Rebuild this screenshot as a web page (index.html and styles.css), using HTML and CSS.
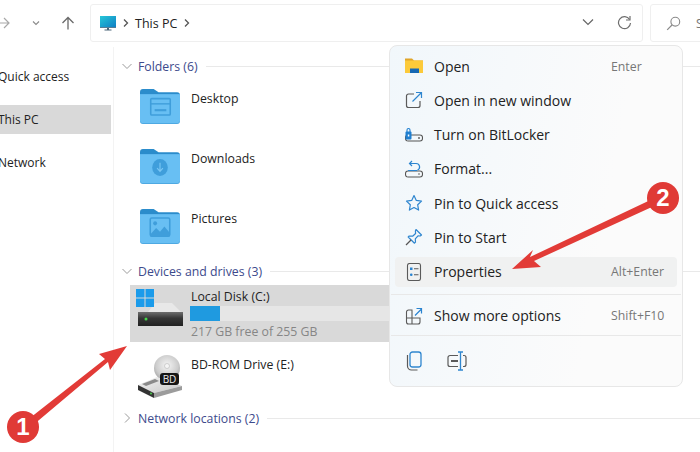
FILE: index.html
```html
<!DOCTYPE html>
<html lang="en">
<head>
<meta charset="utf-8">
<title>This PC</title>
<link rel="stylesheet" href="styles.css">
</head>
<body>
<div class="window">
  <header class="toolbar">
    <nav class="nav">
      <svg class="nav-forward" width="16" height="12" viewBox="0 0 16 12"><path d="M0 6h15M10 1l5 5-5 5" fill="none" stroke="#a8a8a8" stroke-width="1.200"/></svg>
      <svg class="nav-down" width="10" height="10" viewBox="0 0 10 10"><path d="M2 3.500l3 3 3-3" fill="none" stroke="#8a8a8a" stroke-width="1.100"/></svg>
      <svg class="nav-up" width="14" height="14" viewBox="0 0 14 14"><path d="M7 13.500V1.500M1.500 7L7 1.500 12.500 7" fill="none" stroke="#6a6a6a" stroke-width="1.300"/></svg>
    </nav>
    <div class="address">
      <svg class="pc-icon" width="16" height="15" viewBox="0 0 16 15"><defs><linearGradient id="scr" x1="0" y1="0" x2="1" y2="1"><stop offset="0" stop-color="#27c7d8"/><stop offset="1" stop-color="#0f7fc4"/></linearGradient></defs><rect x="0" y="0" width="16" height="11" fill="url(#scr)"/><path d="M0 11h16v.8H0z" fill="#2c5c7c"/><path d="M7 12h2v1.400H7zM4.500 13.400h7v1h-7z" fill="#4a6578"/></svg>
      <svg class="crumb-sep" width="8" height="10" viewBox="0 0 8 10"><path d="M2 1.500l3.500 3.500L2 8.500" fill="none" stroke="#555" stroke-width="1.300"/></svg>
      <span class="crumb">This PC</span>
      <svg class="crumb-sep" width="8" height="10" viewBox="0 0 8 10"><path d="M2 1.500l3.500 3.500L2 8.500" fill="none" stroke="#555" stroke-width="1.300"/></svg>
      <svg class="addr-down" width="12" height="8" viewBox="0 0 12 8"><path d="M1 1.500l5 5 5-5" fill="none" stroke="#666" stroke-width="1.200"/></svg>
      <svg class="addr-refresh" width="15" height="15" viewBox="0 0 15 15"><path d="M12.600 4.500A6 6 0 1 0 13.500 8" fill="none" stroke="#6e6e6e" stroke-width="1.200"/><path d="M13 1v4h-4" fill="none" stroke="#6e6e6e" stroke-width="1.200"/></svg>
    </div>
    <div class="search">
      <svg width="15" height="15" viewBox="0 0 15 15"><circle cx="9.300" cy="5.700" r="4.400" fill="none" stroke="#8a8a8a" stroke-width="1.100"/><path d="M6 9L1.200 13.800" stroke="#8a8a8a" stroke-width="1.200"/></svg>
      <span class="search-text">S</span>
    </div>
  </header>

  <div class="body">
    <aside class="sidebar">
      <div class="side-item">Quick access</div>
      <div class="side-item side-current">This PC</div>
      <div class="side-item">Network</div>
    </aside>

    <main class="content">
      <div class="group-head">
        <svg width="10" height="10" viewBox="0 0 10 10"><path d="M.5 3l4.500 4.500L9.500 3" fill="none" stroke="#9a9a9a" stroke-width="1"/></svg>
        <span class="group-name">Folders (6)</span><span class="group-line"></span>
      </div>
      <div class="folder">
        <svg width="40" height="35" viewBox="0 3 41 33" preserveAspectRatio="none"><path d="M0 6a3 3 0 0 1 3-3h11l5 3h19a3 3 0 0 1 3 3v4H0z" fill="#2b8ccb"/><path d="M0 8h41v25a3 3 0 0 1-3 3H3a3 3 0 0 1-3-3z" fill="#4ea9e2"/><path d="M0 8h41v25a2.500 2.500 0 0 1-2.500 2H2.500A2.500 2.500 0 0 1 0 33z" fill="#68bff3"/><rect x="11" y="12" width="20" height="15.500" rx="1" fill="none" stroke="#3f9edb" stroke-width="1.600"/><path d="M11 17h20" stroke="#3f9edb" stroke-width="1.300"/><path d="M15 23h12" stroke="#3f9edb" stroke-width="2"/></svg>
        <span class="item-name">Desktop</span>
      </div>
      <div class="folder">
        <svg width="40" height="35" viewBox="0 3 41 33" preserveAspectRatio="none"><path d="M0 6a3 3 0 0 1 3-3h11l5 3h19a3 3 0 0 1 3 3v4H0z" fill="#2b8ccb"/><path d="M0 8h41v25a3 3 0 0 1-3 3H3a3 3 0 0 1-3-3z" fill="#4ea9e2"/><path d="M0 8h41v25a2.500 2.500 0 0 1-2.500 2H2.500A2.500 2.500 0 0 1 0 33z" fill="#68bff3"/><circle cx="20.500" cy="20.500" r="8" fill="#3f9edb"/><path d="M20.500 16v8M17.500 21l3 3 3-3" fill="none" stroke="#79c6f4" stroke-width="1.200"/></svg>
        <span class="item-name">Downloads</span>
      </div>
      <div class="folder">
        <svg width="40" height="35" viewBox="0 3 41 33" preserveAspectRatio="none"><path d="M0 6a3 3 0 0 1 3-3h11l5 3h19a3 3 0 0 1 3 3v4H0z" fill="#2b8ccb"/><path d="M0 8h41v25a3 3 0 0 1-3 3H3a3 3 0 0 1-3-3z" fill="#4ea9e2"/><path d="M0 8h41v25a2.500 2.500 0 0 1-2.500 2H2.500A2.500 2.500 0 0 1 0 33z" fill="#68bff3"/><rect x="10.500" y="11.500" width="20" height="17" rx="1.500" fill="none" stroke="#3f9edb" stroke-width="1.600"/><circle cx="15.500" cy="16.500" r="2" fill="#3f9edb"/><path d="M10.500 27l6-6 4 3.500 4.500-5 5.500 6V29h-20z" fill="#3f9edb"/></svg>
        <span class="item-name">Pictures</span>
      </div>

      <div class="group-head group-devices">
        <svg width="10" height="10" viewBox="0 0 10 10"><path d="M.5 3l4.500 4.500L9.500 3" fill="none" stroke="#9a9a9a" stroke-width="1"/></svg>
        <span class="group-name">Devices and drives (3)</span><span class="group-line"></span>
      </div>
      <div class="drive drive-selected">
        <svg class="drive-icon" width="50" height="40" viewBox="0 0 50 40"><defs><linearGradient id="hdd" x1="0" y1="0" x2="0" y2="1"><stop offset="0" stop-color="#6e6e6e"/><stop offset=".45" stop-color="#363636"/><stop offset="1" stop-color="#222"/></linearGradient></defs><path d="M14 23l7-9h17l9 9z" fill="#e8e8e8"/><rect x="4" y="23" width="45" height="14" fill="url(#hdd)"/><circle cx="12" cy="30" r="1.500" fill="#46d84a"/><path d="M2 0h8.500v8.500H2zM11.500 0H20v8.500h-8.500zM2 9.500h8.500V18H2zM11.500 9.500H20V18h-8.500z" fill="#1b9bea"/></svg>
        <div class="drive-info">
          <span class="item-name">Local Disk (C:)</span>
          <div class="meter"><div class="meter-fill"></div></div>
          <span class="drive-free">217 GB free of 255 GB</span>
        </div>
      </div>
      <div class="drive drive-bd">
        <div class="bd-icon">
          <svg width="50" height="46" viewBox="0 0 50 46"><defs><radialGradient id="disc" cx=".5" cy=".4" r=".6"><stop offset="0" stop-color="#f4f4f4"/><stop offset=".7" stop-color="#cdcdcd"/><stop offset="1" stop-color="#a9a9a9"/></radialGradient><linearGradient id="box" x1="0" y1="0" x2="1" y2="1"><stop offset="0" stop-color="#f4f4f4"/><stop offset="1" stop-color="#c6c6c6"/></linearGradient></defs><circle cx="30" cy="15" r="13" fill="url(#disc)"/><circle cx="30" cy="13" r="2.500" fill="#f5f5f5" stroke="#aaa" stroke-width=".5"/><path d="M1 32l19-8 25 9-28 7z" fill="url(#box)"/><path d="M1 32l16 8v5L1 37z" fill="#333"/><path d="M17 40l28-7v4l-28 8z" fill="#9c9c9c"/><path d="M5 31l13-5 4 2-13 5z" fill="#8a8a8a"/><circle cx="14" cy="40.500" r="1" fill="#4fd14f"/></svg>
          <span class="bd-badge">BD</span>
        </div>
        <span class="item-name">BD-ROM Drive (E:)</span>
      </div>

      <div class="group-head">
        <svg width="10" height="10" viewBox="0 0 10 10"><path d="M3 .5l4.500 4.500L3 9.500" fill="none" stroke="#9a9a9a" stroke-width="1"/></svg>
        <span class="group-name">Network locations (2)</span><span class="group-line"></span>
      </div>
    </main>
  </div>

  <div class="menu">
    <div class="menu-row">
      <svg class="menu-icon" width="18" height="18" viewBox="0 0 18 18"><path d="M0 1.500h7l2 2h9V5H0z" fill="#e0a428"/><path d="M0 3.500h18V16H0z" fill="#fcca3a"/><path d="M5 11.500h9V16H5z" fill="#1668b4"/></svg>
      <span class="menu-label">Open</span><span class="menu-key">Enter</span>
    </div>
    <div class="menu-row">
      <svg class="menu-icon" width="18" height="18" viewBox="0 0 18 18"><path d="M9 3H3.500A2 2 0 0 0 1.500 5v9.500a2 2 0 0 0 2 2H13a2 2 0 0 0 2-2V10" fill="none" stroke="#5a5a5a" stroke-width="1.200"/><path d="M7.500 10.500L16 2M11 1.500h5.500V7" fill="none" stroke="#2f86cf" stroke-width="1.200"/></svg>
      <span class="menu-label">Open in new window</span>
    </div>
    <div class="menu-row">
      <svg class="menu-icon" width="18" height="18" viewBox="0 0 18 18"><rect x=".5" y="9" width="17" height="6" rx="2.500" fill="none" stroke="#555" stroke-width="1.100"/><circle cx="14" cy="12" r=".9" fill="#555"/><rect x=".5" y="5.500" width="6" height="8" rx="1" fill="#1f7fd0"/><path d="M2 6V4a1.500 1.500 0 0 1 3 0v2" fill="none" stroke="#1f7fd0" stroke-width="1.100"/><rect x="2.800" y="8.500" width="1.500" height="2" fill="#fff"/></svg>
      <span class="menu-label">Turn on BitLocker</span>
    </div>
    <div class="menu-row">
      <svg class="menu-icon" width="18" height="18" viewBox="0 0 18 18"><rect x=".5" y="11" width="17" height="6" rx="2.500" fill="none" stroke="#555" stroke-width="1.100"/><circle cx="14" cy="14" r=".8" fill="#555"/><path d="M4.500 3.500h6.500a3.500 3.500 0 0 1 1.500 6.700M7 1L4.500 3.500 7 6M3 10.500h9" fill="none" stroke="#2a84d0" stroke-width="1.200"/></svg>
      <span class="menu-label">Format...</span>
    </div>
    <div class="menu-row">
      <svg class="menu-icon" width="18" height="18" viewBox="0 0 18 18"><path d="M9 1.500l2.300 4.900 5.200.7-3.800 3.700.9 5.300L9 13.500l-4.600 2.600.9-5.300L1.500 7.100l5.200-.7z" fill="none" stroke="#2f86cf" stroke-width="1.200" stroke-linejoin="round"/></svg>
      <span class="menu-label">Pin to Quick access</span>
    </div>
    <div class="menu-row">
      <svg class="menu-icon" width="18" height="18" viewBox="0 0 18 18"><path d="M11 1.500l5.500 5.500-1.300 1-2.200-.2-2.700 3 .2 3.400-1 1L3.200 9l1-1 3.400.2 3-2.700L10.400 3z" fill="none" stroke="#2f86cf" stroke-width="1.200" stroke-linejoin="round"/><path d="M1 17l5-5" stroke="#555" stroke-width="1.200"/></svg>
      <span class="menu-label">Pin to Start</span>
    </div>
    <div class="menu-row menu-row-hover">
      <svg class="menu-icon" width="18" height="18" viewBox="0 0 18 18"><rect x="2.500" y=".5" width="13" height="17" rx="2" fill="none" stroke="#5a5a5a" stroke-width="1.100"/><rect x="5" y="4.500" width="2.500" height="2.500" fill="#2a84d0"/><rect x="5" y="10.500" width="2.500" height="2.500" rx="1" fill="#2a84d0"/><path d="M9 5.800h4.500M9 11.800h4.500" stroke="#5a5a5a" stroke-width="1.100"/></svg>
      <span class="menu-label">Properties</span><span class="menu-key">Alt+Enter</span>
    </div>
    <div class="menu-sep menu-sep-a"></div>
    <div class="menu-row">
      <svg class="menu-icon" width="18" height="18" viewBox="0 0 18 18"><path d="M7.500 3H3.500a2 2 0 0 0-2 2v10a2 2 0 0 0 2 2H13a2 2 0 0 0 2-2v-4H7V3.500M1.500 11H7V17" fill="none" stroke="#5a5a5a" stroke-width="1.100"/><path d="M10 8.500L16.500 2M11.500 1.500h5V6.500" fill="none" stroke="#2a84d0" stroke-width="1.200"/></svg>
      <span class="menu-label">Show more options</span><span class="menu-key">Shift+F10</span>
    </div>
    <div class="menu-sep menu-sep-b"></div>
    <div class="menu-tools">
      <svg width="18" height="20" viewBox="0 0 18 20"><rect x="5" y="1" width="11" height="15" rx="2.500" fill="none" stroke="#2f86cf" stroke-width="1.300"/><path d="M2.500 4v11a4 4 0 0 0 4 4h6" fill="none" stroke="#5a5a5a" stroke-width="1.200"/></svg>
      <svg width="20" height="20" viewBox="0 0 20 20"><path d="M11 4.500H3a2 2 0 0 0-2 2v7a2 2 0 0 0 2 2h8M16 4.500h1a2 2 0 0 1 2 2v7a2 2 0 0 1-2 2h-1" fill="none" stroke="#5a5a5a" stroke-width="1.200"/><path d="M4 10h7" stroke="#5a5a5a" stroke-width="2"/><path d="M13.500 1.500v17M11 1h5M11 19h5" fill="none" stroke="#2f86cf" stroke-width="1.300"/></svg>
    </div>
  </div>

  <svg class="arrows" width="700" height="452" viewBox="0 0 700 452">
    <path d="M21 425L105 359 99 354 127 346 110 370 108 362 26 431z" fill="#e23b37"/>
    <path d="M661 195L530 257 533 250 512 269 541 267 534 261 665 201z" fill="#e23b37"/>
  </svg>
  <div class="badge badge-one">1</div>
  <div class="badge badge-two">2</div>
</div>
</body>
</html>
```
FILE: styles.css
```css
* { box-sizing: border-box; }
html, body { margin: 0; padding: 0; }
body { background: #fff; color: #222; font-family: "Open Sans", "Noto Sans", sans-serif; }
.window { position: relative; display: flex; flex-direction: column; width: 700px; height: 452px; overflow: hidden; background: #fff; }

.toolbar { display: flex; flex: 0 0 47px; padding: 4px 0 5px; }
.nav { display: flex; flex: 0 0 90px; align-items: center; }
.nav-forward { margin-left: -6px; }
.nav-down { margin-left: 21px; }
.nav-up { margin-left: 20px; }
.address { display: flex; flex: 0 0 553px; align-items: center; padding-left: 9px; padding-right: 10px; background: #fff; border: 1px solid #efefef; border-radius: 3px; }
.pc-icon { margin-right: 6px; }
.crumb-sep { margin-right: 5px; }
.crumb { margin-right: 6px; font-size: 12.5px; color: #222; }
.addr-down { margin-left: auto; margin-top: -2px; }
.addr-refresh { margin-left: 23px; margin-top: -2px; }
.search { display: flex; flex: 1 0 60px; align-items: center; margin-left: 7px; padding-left: 15px; border: 1px solid #efefef; border-radius: 3px; gap: 15px; }
.search-text { font-size: 12px; color: #777; }

.body { display: flex; flex: 1; min-height: 0; }
.sidebar { flex: 0 0 114px; padding: 15px 2px 0 0; border-right: 1px solid #f3f3f3; display: flex; flex-direction: column; gap: 14px; }
.side-item { height: 29px; line-height: 29px; text-indent: -2px; font-size: 12px; color: #222; white-space: nowrap; overflow: hidden; }
.side-current { background: #d9d9d9; }

.content { flex: 1; min-width: 0; padding-top: 9px; }
.group-head { display: flex; align-items: center; height: 20px; padding-left: 8px; }
.group-head:first-child { margin-bottom: 5px; }
.group-devices { margin-bottom: 4px; }
.group-name { margin-left: 6px; font-size: 12.3px; color: #3d4a8c; white-space: nowrap; }
.group-line { flex: 1; height: 1px; margin-left: 8px; background: #e9e9e9; }
.folder { display: flex; align-items: flex-start; height: 60px; padding: 8px 0 0 26px; gap: 11px; }
.folder svg { flex: none; }
.item-name { display: block; font-size: 12.3px; line-height: 16px; color: #222; white-space: nowrap; }
.folder .item-name { margin-top: 2px; }

.drive { display: flex; width: 270px; margin-left: 16px; }
.drive-selected { height: 57px; background: #d9d9d9; padding: 4px 0 0 4px; }
.drive-icon { flex: none; }
.drive-info { flex: 1; margin-left: 6px; }
.drive-info .item-name { margin-left: 1px; }
.meter { height: 15px; margin: 1px 0 3px; background: #e6e6e6; }
.meter-fill { width: 30px; height: 100%; background: #1f9ae0; }
.drive-free { display: block; margin-left: 1px; font-size: 12.3px; line-height: 16px; color: #868686; white-space: nowrap; }
.drive-bd { height: 66px; padding-left: 7px; }
.drive-bd .item-name { margin-top: 15px; margin-left: 4px; }
.bd-icon { position: relative; flex: none; width: 50px; height: 46px; margin-top: 11px; }
.bd-badge { position: absolute; left: 23px; top: 20px; width: 19px; height: 12px; border-radius: 3px; background: #161616; color: #eee; font-size: 10px; line-height: 12px; text-align: center; }

.menu { position: absolute; left: 389px; top: 45px; width: 294px; height: 342px; padding: 5px 5px 0; background: linear-gradient(100deg, #f1f7fb, #fbfbfb 70%); border: 1px solid #e7e7e7; border-radius: 8px; }
.menu-row { display: flex; align-items: center; height: 30px; margin-bottom: 4.3px; padding: 0 10px; border-radius: 4px; }
.menu-row-hover { background: #f0f1f1; margin-bottom: 0; }
.menu-icon { flex: none; margin-right: 11px; }
.menu-label { flex: 1; font-size: 14px; color: #222; white-space: nowrap; }
.menu-key { flex: 0 0 56px; font-size: 12.3px; color: #777; white-space: nowrap; }
.menu-sep { height: 1px; margin-left: -4px; margin-right: -4px; background: #e8e8e8; }
.menu-sep-a { margin-top: 7px; margin-bottom: 6px; }
.menu-sep-b { margin-top: 2px; }
.menu-tools { display: flex; align-items: center; height: 50px; padding-left: 10px; gap: 24px; }

.arrows { position: absolute; left: 0; top: 0; pointer-events: none; }
.badge { position: absolute; width: 32px; height: 32px; border-radius: 50%; background: #e03a36; color: #fff; font: bold 24px/32px "Liberation Sans", sans-serif; text-align: center; }
.badge-one { left: 7px; top: 411px; }
.badge-two { left: 647px; top: 182px; }
```
